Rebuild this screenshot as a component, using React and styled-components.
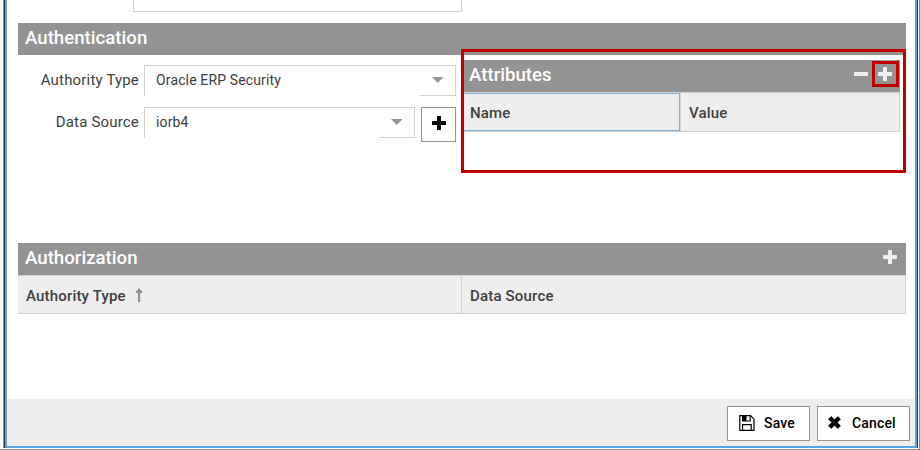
import React from "react";
import styled, { createGlobalStyle } from "styled-components";

const Global = createGlobalStyle`
  * { box-sizing: border-box; }
  body { margin: 0; background: #fff; font-family: Roboto, "Liberation Sans", sans-serif; color: #404040; }
`;

const Page = styled.div`
  width: 920px;
  height: 450px;
  padding: 0 0 0 3px;
  border-right: 1px solid #8c8c8c;
  border-bottom: 1px solid #8c8c8c;
  overflow: hidden;
`;

const Frame = styled.div`
  width: 915px;
  height: 448px;
  border-left: 1px solid #8c8c8c;
`;

const FrameInner = styled.div`
  height: 448px;
  border-left: 1px solid #333;
  border-right: 1px solid #333;
`;

const Dialog = styled.div`
  height: 448px;
  border: 2px solid #5ba3dc;
  border-top: 0;
  display: flex;
  flex-direction: column;
  background: #fff;
`;

const Content = styled.main`
  flex: 1;
  padding: 0 9px 0 11px;
`;

const CutField = styled.div`
  width: 329px;
  height: 12px;
  margin-left: 115px;
  border: 1px solid #d2d2ca;
  border-top: 0;
`;

const TitleBar = styled.header`
  display: flex;
  align-items: center;
  justify-content: space-between;
  height: 32px;
  padding: 0 ${(p) => p.$end || "8px"} 2px 7px;
  background: #939393;
  color: #fff;
`;

const Title = styled.h2`
  margin: 0;
  font-size: 18.67px;
  line-height: 28px;
  font-weight: 500;
`;

const Authentication = styled.section`
  margin-top: 11px;
  height: 220px;
`;

const Columns = styled.div`
  display: grid;
  grid-template-columns: 438px 444px;
  column-gap: 6px;
`;

const Form = styled.div`
  display: flex;
  flex-direction: column;
  gap: 7px;
  padding-top: 10px;
`;

const FormRow = styled.div`
  display: flex;
  align-items: flex-start;
  height: 35px;
`;

const Label = styled.label`
  width: 126px;
  padding-right: 5px;
  text-align: right;
  font-size: 15px;
  line-height: 30px;
  white-space: nowrap;
  letter-spacing: 0.18px;
`;

const Select = styled.div`
  display: flex;
  justify-content: space-between;
  width: ${(p) => p.$width};
  height: 31px;
  border: 1px solid #d2d2ca;
  border-width: 1px 0 0 1px;
  padding-left: 11px;
  font-size: 14px;
  line-height: 29px;
  letter-spacing: 0.14px;
`;

const Trigger = styled.span`
  width: 36px;
  border: 1px solid #d2d2ca;
  border-width: 0 1px 1px 0;
  padding: 11px 0 0 12px;
  line-height: 0;
`;

const AddButton = styled.button`
  display: flex;
  align-items: center;
  justify-content: center;
  width: 35px;
  height: 35px;
  margin-left: 6px;
  padding: 0 0 3px;
  border: 1px solid #939393;
  background: #fff;
  color: #000;
`;

const Attributes = styled.div`
  position: relative;
  padding: 5px 6px 0 0;
`;

const Highlight = styled.div`
  position: absolute;
  left: -1px;
  top: -6px;
  width: 445px;
  height: 124px;
  border: 3px solid #c00000;
`;

const Tools = styled.div`
  display: flex;
  align-items: center;
  gap: 10px;
  padding-bottom: 2px;
  color: #eee;
`;

const Tool = styled.span`
  position: relative;
  display: flex;
`;

const ToolHighlight = styled.span`
  position: absolute;
  left: -6px;
  top: -6px;
  width: 27px;
  height: 26px;
  border: 3px solid #c00000;
`;

const HeaderRow = styled.div`
  display: grid;
  grid-template-columns: ${(p) => p.$columns};
  height: ${(p) => p.$height};
  border: 1px solid #d2d2ca;
  border-left: 0;
  background: #eee;
`;

const HeaderCell = styled.div`
  display: flex;
  align-items: center;
  padding: ${(p) => (p.$focused ? "2px 7px 0" : "2px 8px 0")};
  font-size: 15px;
  font-weight: 500;
  letter-spacing: 0.18px;
  border: 0 solid #d2d2ca;
  border-left-width: ${(p) => (p.$divided ? "1px" : "0")};
  ${(p) => p.$focused && "border: 1px solid #7eaee0;"}
`;

const SortIcon = styled.svg`
  margin: 0 0 1px 9px;
`;

const Footer = styled.footer`
  display: flex;
  justify-content: flex-end;
  gap: 7px;
  height: 47px;
  padding: 7px 5px 0;
  background: #eee;
`;

const FooterButton = styled.button`
  display: flex;
  align-items: center;
  width: ${(p) => p.$width};
  height: 35px;
  padding: 0 0 2px ${(p) => p.$inset};
  gap: ${(p) => p.$gap};
  border: 1px solid #939393;
  background: #fff;
  color: #000;
  font: 500 14px Roboto, sans-serif;
  letter-spacing: 0.15px;
`;

const Plus = () => (
  <svg width="14" height="14" viewBox="0 0 14 14" fill="currentColor">
    <path d="M5.6 0h2.8q.6 0 .6.6V5h4.4q.6 0 .6.6v2.8q0 .6-.6.6H9v4.4q0 .6-.6.6H5.6q-.6 0-.6-.6V9H.6Q0 9 0 8.400V5.600Q0 5 .6 5H5V.6Q5 0 5.600 0Z" />
  </svg>
);

const Minus = () => (
  <svg width="14" height="14" viewBox="0 0 14 14" fill="currentColor">
    <rect y="5" width="14" height="4" rx="0.5" />
  </svg>
);

const Caret = () => (
  <svg width="12" height="6" viewBox="0 0 12 6">
    <path d="M0 0h11.500L5.750 6Z" fill="#939393" />
  </svg>
);

const Floppy = () => (
  <svg width="16" height="16" viewBox="0 0 16 16" fill="none" stroke="#000" strokeWidth="1.200">
    <path d="M.8.700H11.500L15 4.200V15.300H.8Z" />
    <path d="M3.600 15V9.600h8.600V15M3.600 1v5h7.600V1" />
    <path d="M4 1H7.500V6H4Z" fill="#000" stroke="none" />
  </svg>
);

const Cross = () => (
  <svg width="13" height="13" viewBox="0 0 13 13">
    <path d="M3.200.5 6.500 3.800 9.800.5 12.500 3.200 9.200 6.500 12.500 9.800 9.800 12.500 6.500 9.200 3.200 12.500.5 9.800 3.800 6.500.5 3.200Z" fill="#000" stroke="#000" strokeWidth=".7" strokeLinejoin="round" />
  </svg>
);

export default function App() {
  return (
    <Page>
      <Global />
      <Frame>
        <FrameInner>
          <Dialog>
            <Content>
              <CutField />
              <Authentication>
                <TitleBar><Title>Authentication</Title></TitleBar>
                <Columns>
                  <Form>
                    <FormRow>
                      <Label>Authority Type</Label>
                      <Select $width="312px">Oracle ERP Security<Trigger><Caret /></Trigger></Select>
                    </FormRow>
                    <FormRow>
                      <Label>Data Source</Label>
                      <Select $width="271px">iorb4<Trigger><Caret /></Trigger></Select>
                      <AddButton aria-label="Add data source"><Plus /></AddButton>
                    </FormRow>
                  </Form>
                  <Attributes>
                    <TitleBar>
                      <Title>Attributes</Title>
                      <Tools>
                        <Tool><Minus /></Tool>
                        <Tool><Plus /><ToolHighlight /></Tool>
                      </Tools>
                    </TitleBar>
                    <HeaderRow $columns="218px 1fr" $height="40px">
                      <HeaderCell $focused>Name</HeaderCell>
                      <HeaderCell $divided>Value</HeaderCell>
                    </HeaderRow>
                    <Highlight />
                  </Attributes>
                </Columns>
              </Authentication>
              <section>
                <TitleBar $end="9px">
                  <Title>Authorization</Title>
                  <Tools><Tool><Plus /></Tool></Tools>
                </TitleBar>
                <HeaderRow $columns="443px 1fr" $height="39px">
                  <HeaderCell>
                    Authority Type
                    <SortIcon width="8" height="14" viewBox="0 0 8 14">
                      <path d="M4 0 7.200 3.500V5H5.200V14H3V5H1V3.500Z" fill="#939393" />
                    </SortIcon>
                  </HeaderCell>
                  <HeaderCell $divided>Data Source</HeaderCell>
                </HeaderRow>
              </section>
            </Content>
            <Footer>
              <FooterButton $width="83px" $inset="11px" $gap="9px"><Floppy />Save</FooterButton>
              <FooterButton $width="93px" $inset="10px" $gap="11px"><Cross />Cancel</FooterButton>
            </Footer>
          </Dialog>
        </FrameInner>
      </Frame>
    </Page>
  );
}
